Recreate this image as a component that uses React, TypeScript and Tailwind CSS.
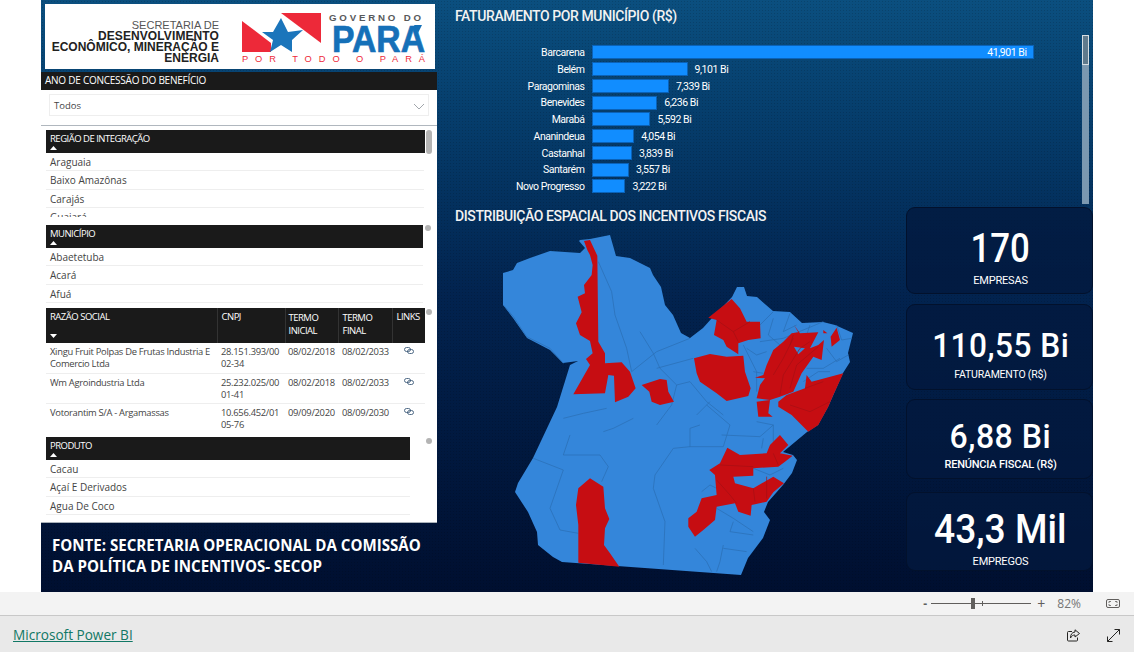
import React from 'react';

const SEGOE = "font-['Open_Sans','Noto_Sans',sans-serif]";
const DIN = "font-['Roboto','Inter',sans-serif]";

const bars = [
    { name: 'Barcarena', value: 41.901, label: '41,901 Bi' },
    { name: 'Belém', value: 9.101, label: '9,101 Bi' },
    { name: 'Paragominas', value: 7.339, label: '7,339 Bi' },
    { name: 'Benevides', value: 6.236, label: '6,236 Bi' },
    { name: 'Marabá', value: 5.592, label: '5,592 Bi' },
    { name: 'Ananindeua', value: 4.054, label: '4,054 Bi' },
    { name: 'Castanhal', value: 3.839, label: '3,839 Bi' },
    { name: 'Santarém', value: 3.557, label: '3,557 Bi' },
    { name: 'Novo Progresso', value: 3.222, label: '3,222 Bi' },
];

const rows = [
    { razao: ['Xingu Fruit Polpas De Frutas Industria E', 'Comercio Ltda'], cnpj: ['28.151.393/00', '02-34'], ini: '08/02/2018', fim: '08/02/2033', h: 'h-[30px]' },
    { razao: ['Wm Agroindustria Ltda'], cnpj: ['25.232.025/00', '01-41'], ini: '08/02/2018', fim: '08/02/2033', h: 'h-[30px]' },
    { razao: ['Votorantim S/A - Argamassas'], cnpj: ['10.656.452/01', '05-76'], ini: '09/09/2020', fim: '08/09/2030', h: 'h-[33px]' },
];

const Caret = ({ down }: { down?: boolean }) => (
    <svg width="7" height="4" viewBox="0 0 7 4" className="block">
        <path d={down ? 'M0 0H7L3.5 4Z' : 'M0 4H7L3.5 0Z'} fill="#fff" />
    </svg>
);

const SlicerHead = ({ title, w }: { title: string; w: string }) => (
    <div className={`${w} h-[23px] bg-[#1a1a1a] pl-[4px] pt-[1px] text-[#fff] text-[9.5px] leading-[15px] tracking-[-0.5px]`}>
        {title}
        <Caret />
    </div>
);

const SlicerItems = ({ items, w }: { items: string[]; w: string }) => (
    <div className={w}>
        {items.map((item) => (
            <div key={item} className="h-[18.4px] pl-[4px] pt-[2px] border-b border-[#eeeeee] text-[10px] leading-[15px] text-[#444]">
                {item}
            </div>
        ))}
    </div>
);

const ScrollDot = ({ tall }: { tall?: boolean }) => (
    <div className={`w-[6px] rounded-full bg-[#b4b4b4] ${tall ? 'h-[24px]' : 'h-[6px]'}`}></div>
);

const Card = ({ value, label, box, valueClass, labelSize }: { value: string; label: string; box: string; valueClass: string; labelSize: string }) => (
    <div className={`${box} pl-[2px] flex flex-col items-center justify-center border border-[#02112c] rounded-[9px] bg-[#02193f]/80 text-white ${DIN}`}>
        <div className={`${valueClass} font-medium whitespace-nowrap`}>{value}</div>
        <div className={`${labelSize} mt-[3px] tracking-[-0.2px]`}>{label}</div>
    </div>
);

const Logo = () => (
    <div className="ml-[4px] w-[390px] h-[65px] bg-white flex">
        <div className="w-[174px] pt-[16px] text-right text-[#222] text-[12px] leading-[11px] font-['Liberation_Sans',sans-serif] whitespace-nowrap">
            <div className="text-[#555] text-[11px]">SECRETARIA DE</div>
            <div className="font-bold tracking-[0.1px]">DESENVOLVIMENTO</div>
            <div className="font-bold">ECONÔMICO, MINERAÇÃO E</div>
            <div className="font-bold">ENERGIA</div>
        </div>
        <svg width="190" height="65" viewBox="0 0 190 65" className="ml-[22px]">
            <path d="M1 17L30 39V48H1Z" fill="#ed2939" />
            <path d="M40 9H80V39Z" fill="#ed2939" />
            <path d="M40 14L47 28L62 26L51 36L51 48L40 41L29 48L32 36L21 28L32 28Z" fill="#1b75bb" />
            <text x="88" y="17" fontFamily="Liberation Sans" fontWeight="700" fontSize="9.7" textLength="92" fill="#58595b">GOVERNO DO</text>
            <text x="91" y="48" fontFamily="Liberation Sans" fontWeight="700" fontSize="37" textLength="93" lengthAdjust="spacingAndGlyphs" fill="#1570b8" stroke="#1570b8" strokeWidth="0.7">PARA</text>
            <path d="M173 21H181L177 29Z" fill="#1570b8" />
            <text x="1" y="57.500" fontFamily="Liberation Sans" fontSize="9.3" textLength="183" fill="#ed2939">POR TODO O PARÁ</text>
        </svg>
    </div>
);

const Grid = () => (
    <table className="w-[379px] table-fixed border-collapse text-[9.4px] leading-[12px] tracking-[-0.3px]">
        <thead>
            <tr className="bg-[#1a1a1a] text-white h-[35px] align-top text-[9.5px] tracking-[-0.5px]">
                <th className="w-[171px] font-normal text-left pl-[4px] pt-[3px]">
                    RAZÃO SOCIAL
                    <div className="mt-[11px]"><Caret down /></div>
                </th>
                <th className="w-[68px] font-normal text-left pl-[4px] pt-[3px] border-l border-[#333]">CNPJ</th>
                <th className="w-[53px] font-normal text-left pl-[3px] pt-[3px] border-l border-[#333] leading-[13px]">TERMO<br />INICIAL</th>
                <th className="w-[54px] font-normal text-left pl-[4px] pt-[3px] border-l border-[#333] leading-[13px]">TERMO<br />FINAL</th>
                <th className="font-normal text-left pl-[4px] pt-[3px] border-l border-[#333]">LINKS</th>
            </tr>
        </thead>
        <tbody className="text-[#444]">
            {rows.map((r) => (
                <tr key={r.cnpj[0]} className={`${r.h} align-top border-b border-[#eee] last:border-b-0`}>
                    <td className="pl-[4px] pt-[3px]">{r.razao.map((t) => <div key={t} className="whitespace-nowrap">{t}</div>)}</td>
                    <td className="pl-[4px] pt-[3px]">{r.cnpj.map((t) => <div key={t}>{t}</div>)}</td>
                    <td className="pl-[3px] pt-[3px]">{r.ini}</td>
                    <td className="pl-[4px] pt-[3px]">{r.fim}</td>
                    <td className="pl-[12px] pt-[4px]">
                        <svg width="10" height="7" viewBox="0 0 10 7" fill="none" stroke="#3c5a78" strokeWidth="0.9">
                            <rect x="0.5" y="0.5" width="6" height="4" rx="2" />
                            <rect x="3.5" y="2.5" width="6" height="4" rx="2" />
                        </svg>
                    </td>
                </tr>
            ))}
        </tbody>
    </table>
);

const Map = () => (
    <svg width="370" height="350" viewBox="490 230 370 350" className="block">
        <path
            fill="#3486da"
            d="M580 240L590 239L610 235L616 256L630 258L650 268L653 275L661 287L665 305L673 315L681 333L690 338L703 328L712 318L732 297L737 287L744 287L747 296L757 297L773 311L790 312L802 323L823 322L835 325L853 333L848 353L850 362L843 373L828 407L818 425L807 432L783 452L793 455L797 460L792 473L783 485L768 502L764 512L770 520L763 538L748 558L741 575L562 562L553 557L538 545L537 532L528 512L515 492L518 483L533 458L557 407L570 365L578 361L563 363L550 350L527 338L513 318L503 305L503 273L513 270L517 263L530 258L550 251L580 253L585 248L579 241Z"
        />
        {/* divisas dos municípios */}
        <g transform="translate(490 225) scale(0.3333)" fill="none" stroke="#2a6fb5" strokeWidth="2.2">
            <path d="M40 240L70 275L110 335L180 370L220 415" />
            <path d="M325 110L365 200L375 270L410 370L425 440L500 380L600 340" />
            <path d="M450 320L490 385L510 430L560 480L600 470L650 530L700 570" />
            <path d="M500 430L610 400M760 360L800 440L800 500M810 300L850 260M810 350L880 340L1000 290" />
            <path d="M560 480L545 540L500 600M620 570L660 530" />
            <path d="M1010 370L1040 410L1075 390M950 430L1000 430L1050 400" />
            <path d="M850 280L835 330L870 360M900 265L880 320L920 300M960 300L950 330M1040 300L1055 345L1085 340" />
            <path d="M770 370L800 390L830 380M790 440L820 445M940 470L985 440L1020 440" />
        </g>
        <g transform="translate(490 405) scale(0.3333)" fill="none" stroke="#2a6fb5" strokeWidth="2.2">
            <path d="M220 40L280 25L350 10M430 40L370 70L340 80M240 90L220 150L330 150L355 185L335 230" />
            <path d="M130 160L220 195L180 310L210 375L265 385" />
            <path d="M600 125L700 125L720 60L650 0M600 125L550 130L495 210L490 250L525 350L520 480" />
            <path d="M600 125L600 70L630 60M695 90L810 95L850 60" />
            <path d="M615 430L650 470L665 500M700 420L690 470L680 500M700 430L770 440M730 350L720 380L790 390M680 310L730 340L790 380" />
            <path d="M635 260L660 240L680 250M800 50L850 60L850 110M820 100L815 130M790 190L840 210L880 190" />
        </g>
        <g transform="translate(490 225) scale(0.3333)" fill="#c60d12">
            <polygon points="282,48 300,45 322,92 325,350 345,385 345,415 395,412 420,440 437,490 415,515 375,532 372,452 355,450 345,505 250,508 300,420 288,402 308,385 300,348 270,330 258,295 275,262 263,215 285,205 282,180 305,150 308,120 300,90 292,75" />
            <polygon points="455,480 510,462 530,465 535,500 552,530 510,540 485,530 478,500" />
            <polygon points="612,400 660,387 710,395 760,392 765,440 782,490 775,513 710,528 680,505 630,470 620,445" />
            <polygon points="655,278 725,222 750,250 770,290 810,290 812,340 775,345 745,355 745,388 710,365 700,345 672,330 680,285" />
            <polygon points="830,420 850,375 880,350 905,325 925,322 912,300 930,325 985,322 960,370 985,360 1002,345 995,405 970,395 935,445 910,500 870,515 840,525 800,520 810,480 825,460 795,458 820,450" />
            <polygon points="800,530 840,525 835,565 848,575 805,575" />
            <polygon points="865,530 890,510 945,490 950,450 965,470 1060,445 1030,510 1015,545 985,600 955,620 905,570 865,545" />
            <polygon points="1040,308 1050,345 1025,365 1022,335" />
            <polygon points="1000,315 1012,325 1000,325" />
            <polygon points="912,365 945,370 925,388" fill="#3486da" />
        </g>
        <g transform="translate(490 405) scale(0.3333)" fill="#c60d12">
            <polygon points="300,220 340,245 345,310 358,342 345,370 342,420 360,445 388,485 265,473 265,360 258,300 265,250" />
            <polygon points="712,128 750,150 830,145 840,120 870,90 895,120 870,145 908,152 885,170 865,185 790,190 790,212 730,215 735,235 790,250 850,215 882,235 850,262 830,290 785,300 782,332 745,320 735,295 680,305 675,345 640,375 615,395 595,365 595,340 620,320 635,280 680,270 675,210 658,195 690,175" />
        </g>
        {/* divisas sobre as áreas vermelhas */}
        <g transform="translate(490 225) scale(0.3333)" fill="none" stroke="#a50d13" strokeWidth="2">
            <path d="M680 285L730 320L780 290M730 320L745 350M850 450L880 400L910 340M870 510L880 450L930 370L960 350M900 490L920 420L985 365M910 330L900 360" />
            <path d="M900 540L960 560L1020 530M945 490L1000 470" />
        </g>
        <g transform="translate(490 405) scale(0.3333)" fill="none" stroke="#a50d13" strokeWidth="2">
            <path d="M690 180L790 185M680 225L720 270L740 295M790 250L795 290M850 145L865 180M830 215L830 280" />
        </g>
    </svg>
);

const App: React.FC = () => {
    return (
        <div className={`w-[1134px] h-[652px] bg-white flex flex-col overflow-hidden ${SEGOE}`}>
            <div className="h-[592px] pl-[41px] pr-[41px]">
                <div className="w-[1052px] h-[592px] bg-gradient-to-b from-[#0b4f7f] via-[#02234f] to-[#000f30]">
                    <div className="h-full flex bg-[radial-gradient(rgba(0,0,0,0.14)_1px,transparent_1px)] bg-[length:3px_3px]">
                        {/* coluna esquerda */}
                        <div className="w-[396px] pt-[4px]">
                            <Logo />
                            <div className="mt-[3px] h-[451px] bg-white border-b border-[#aab2ba]">
                                <div className="h-[18px] bg-[#1a1a1a] pl-[4px] text-white text-[10px] leading-[17px] tracking-[-0.25px]">ANO DE CONCESSÃO DO BENEFÍCIO</div>
                                <div className="mx-[8px] mt-[4px] h-[22px] border border-[#eeeeee] flex items-center justify-between pl-[4px] pr-[3px] pt-[3px] text-[9.5px] text-[#444]">
                                    Todos
                                    <svg width="12" height="7" viewBox="0 0 12 7" fill="none" stroke="#8a9097" strokeWidth="0.8"><path d="M1 1L6 6L11 1" /></svg>
                                </div>
                                <div className="mt-[9px] h-px bg-[#b0b7be]"></div>

                                <div className="mt-[4px] ml-[5px] flex gap-[1px] h-[87px] overflow-hidden">
                                    <div className="w-[379px]">
                                        <SlicerHead title="REGIÃO DE INTEGRAÇÃO" w="w-[379px]" />
                                        <SlicerItems items={['Araguaia', 'Baixo Amazônas', 'Carajás', 'Guajará']} w="w-[378px]" />
                                    </div>
                                    <ScrollDot tall />
                                </div>

                                <div className="mt-[8px] ml-[5px] flex gap-[2px] h-[78px] overflow-hidden">
                                    <div className="w-[377px]">
                                        <SlicerHead title="MUNICÍPIO" w="w-[377px]" />
                                        <SlicerItems items={['Abaetetuba', 'Acará', 'Afuá']} w="w-[377px]" />
                                    </div>
                                    <ScrollDot />
                                </div>

                                <div className="mt-[5px] ml-[5px] flex gap-[1px] h-[129px]">
                                    <Grid />
                                    <div className="mt-[1px]"><ScrollDot /></div>
                                </div>

                                <div className="ml-[5px] flex gap-[16px] h-[84px]">
                                    <div className="w-[364px]">
                                        <SlicerHead title="PRODUTO" w="w-[364px]" />
                                        <SlicerItems items={['Cacau', 'Açaí E Derivados', 'Agua De Coco']} w="w-[364px]" />
                                    </div>
                                    <div className="mt-[1px]"><ScrollDot /></div>
                                </div>
                            </div>
                            <div className="mt-[12px] pl-[11px] text-white text-[15.1px] leading-[21px] font-bold w-[396px] whitespace-nowrap">
                                FONTE: SECRETARIA OPERACIONAL DA COMISSÃO<br />DA POLÍTICA DE INCENTIVOS- SECOP
                            </div>
                        </div>

                        {/* coluna direita */}
                        <div className="flex-1 pl-[18px]">
                            <h2 className={`pt-[8px] text-[14px] leading-[17px] font-medium text-[#f2f2f2] tracking-[-0.4px] ${DIN}`}>FATURAMENTO POR MUNICÍPIO (R$)</h2>
                            <div className="flex">
                                <div className={`w-[627px] pt-[19px] ${DIN}`}>
                                    {bars.map((b) => (
                                        <div key={b.name} className="h-[16.75px] flex items-center text-[10.5px] tracking-[-0.45px] text-white">
                                            <div className="w-[136.5px] pr-[7px] pt-[1px] text-right">{b.name}</div>
                                            <div className="h-[14px] flex items-center justify-end bg-[#118dff] border border-[#0a62b8] pr-[6px]" style={{ width: `${b.value * 10.55}px` }}>
                                                {b.value > 20 && b.label}
                                            </div>
                                            {b.value < 20 && <div className="pl-[7px] pt-[1px]">{b.label}</div>}
                                        </div>
                                    ))}
                                </div>
                                <div className="mt-[10px] w-[7px] h-[169px] bg-[#7b98b0]">
                                    <div className="h-[30px] bg-[#5f7a8d] border border-[#d5dde3]"></div>
                                </div>
                            </div>
                            <div className="flex mt-[2px]">
                                <div className="w-[451px]">
                                    <h2 className={`pt-[2px] text-[14px] leading-[17px] font-medium text-[#f2f2f2] tracking-[-0.4px] ${DIN}`}>DISTRIBUIÇÃO ESPACIAL DOS INCENTIVOS FISCAIS</h2>
                                    <div className="ml-[35px] mt-[5px]">
                                        <Map />
                                    </div>
                                </div>
                                <div className="w-[187px] mt-[1px]">
                                    <Card value="170" label="EMPRESAS" box="h-[87px] mb-[10px] pt-[16px]" valueClass="text-[40px] leading-[42px] scale-x-[0.87]" labelSize="text-[11px]" />
                                    <Card value="110,55 Bi" label="FATURAMENTO (R$)" box="h-[86px] mb-[9px] pt-[14px]" valueClass="text-[34px] leading-[38px] tracking-[0.5px] scale-x-[0.93]" labelSize="text-[10.5px]" />
                                    <Card value="6,88 Bi" label="RENÚNCIA FISCAL (R$)" box="h-[80px] mb-[13px] pt-[15px]" valueClass="text-[33px] leading-[34px] tracking-[0.5px] scale-x-[0.97]" labelSize="text-[11px] font-medium" />
                                    <Card value="43,3 Mil" label="EMPREGOS" box="h-[79px] pt-[17px]" valueClass="text-[40px] leading-[42px] scale-x-[0.93]" labelSize="text-[11px]" />
                                </div>
                            </div>
                        </div>
                    </div>
                </div>
            </div>

            {/* barra de zoom */}
            <div className="h-[24px] bg-[#f3f3f3] border-b border-[#c8c8c8] flex items-center justify-end pr-[14px] text-[#605e5c]">
                <span className="w-[7px] text-[12px] font-bold">-</span>
                <div className="w-[100px] h-[1px] bg-[#605e5c] flex items-center ml-[1px]">
                    <div className="ml-[40px] w-[4px] h-[11px] bg-[#605e5c]"></div>
                    <div className="ml-[7px] w-[1px] h-[5px] bg-[#605e5c]"></div>
                </div>
                <span className="ml-[6px] text-[14px] leading-none">+</span>
                <span className="ml-[12px] text-[12px] text-[#757575]">82%</span>
                <svg width="14" height="9" viewBox="0 0 14 9" fill="none" stroke="#605e5c" className="ml-[25px]">
                    <rect x="0.5" y="0.5" width="13" height="8" rx="1.5" />
                    <path d="M3 4V2.5H5M9 2.5H11V4M11 5V6.5H9M5 6.5H3V5" strokeWidth="0.8" />
                </svg>
            </div>

            {/* rodapé */}
            <div className="flex-1 bg-[#e9e9e9] flex items-center justify-between pl-[13px] pr-[14px] pt-[3px]">
                <a href="#" className="text-[13.6px] text-[#117865] underline">Microsoft Power BI</a>
                <div className="flex items-center gap-[27px]">
                    <svg width="13" height="13" viewBox="0 0 13 13" fill="none" stroke="#252423">
                        <path d="M5 2.5H1.5a1 1 0 0 0-1 1V11a1 1 0 0 0 1 1h8a1 1 0 0 0 1-1V8.5" />
                        <path d="M8 .8L12.5 4.5L8 8V6C6 6 4.5 6.800 3.500 9C3.500 5.500 5 3.200 8 3Z" />
                    </svg>
                    <svg width="13" height="13" viewBox="0 0 13 13" fill="none" stroke="#252423">
                        <path d="M.5 12.500L12.500 .5M7.500 .5H12.500V5.500M.5 7.500V12.500H5.500" />
                    </svg>
                </div>
            </div>
        </div>
    );
};

export default App;
